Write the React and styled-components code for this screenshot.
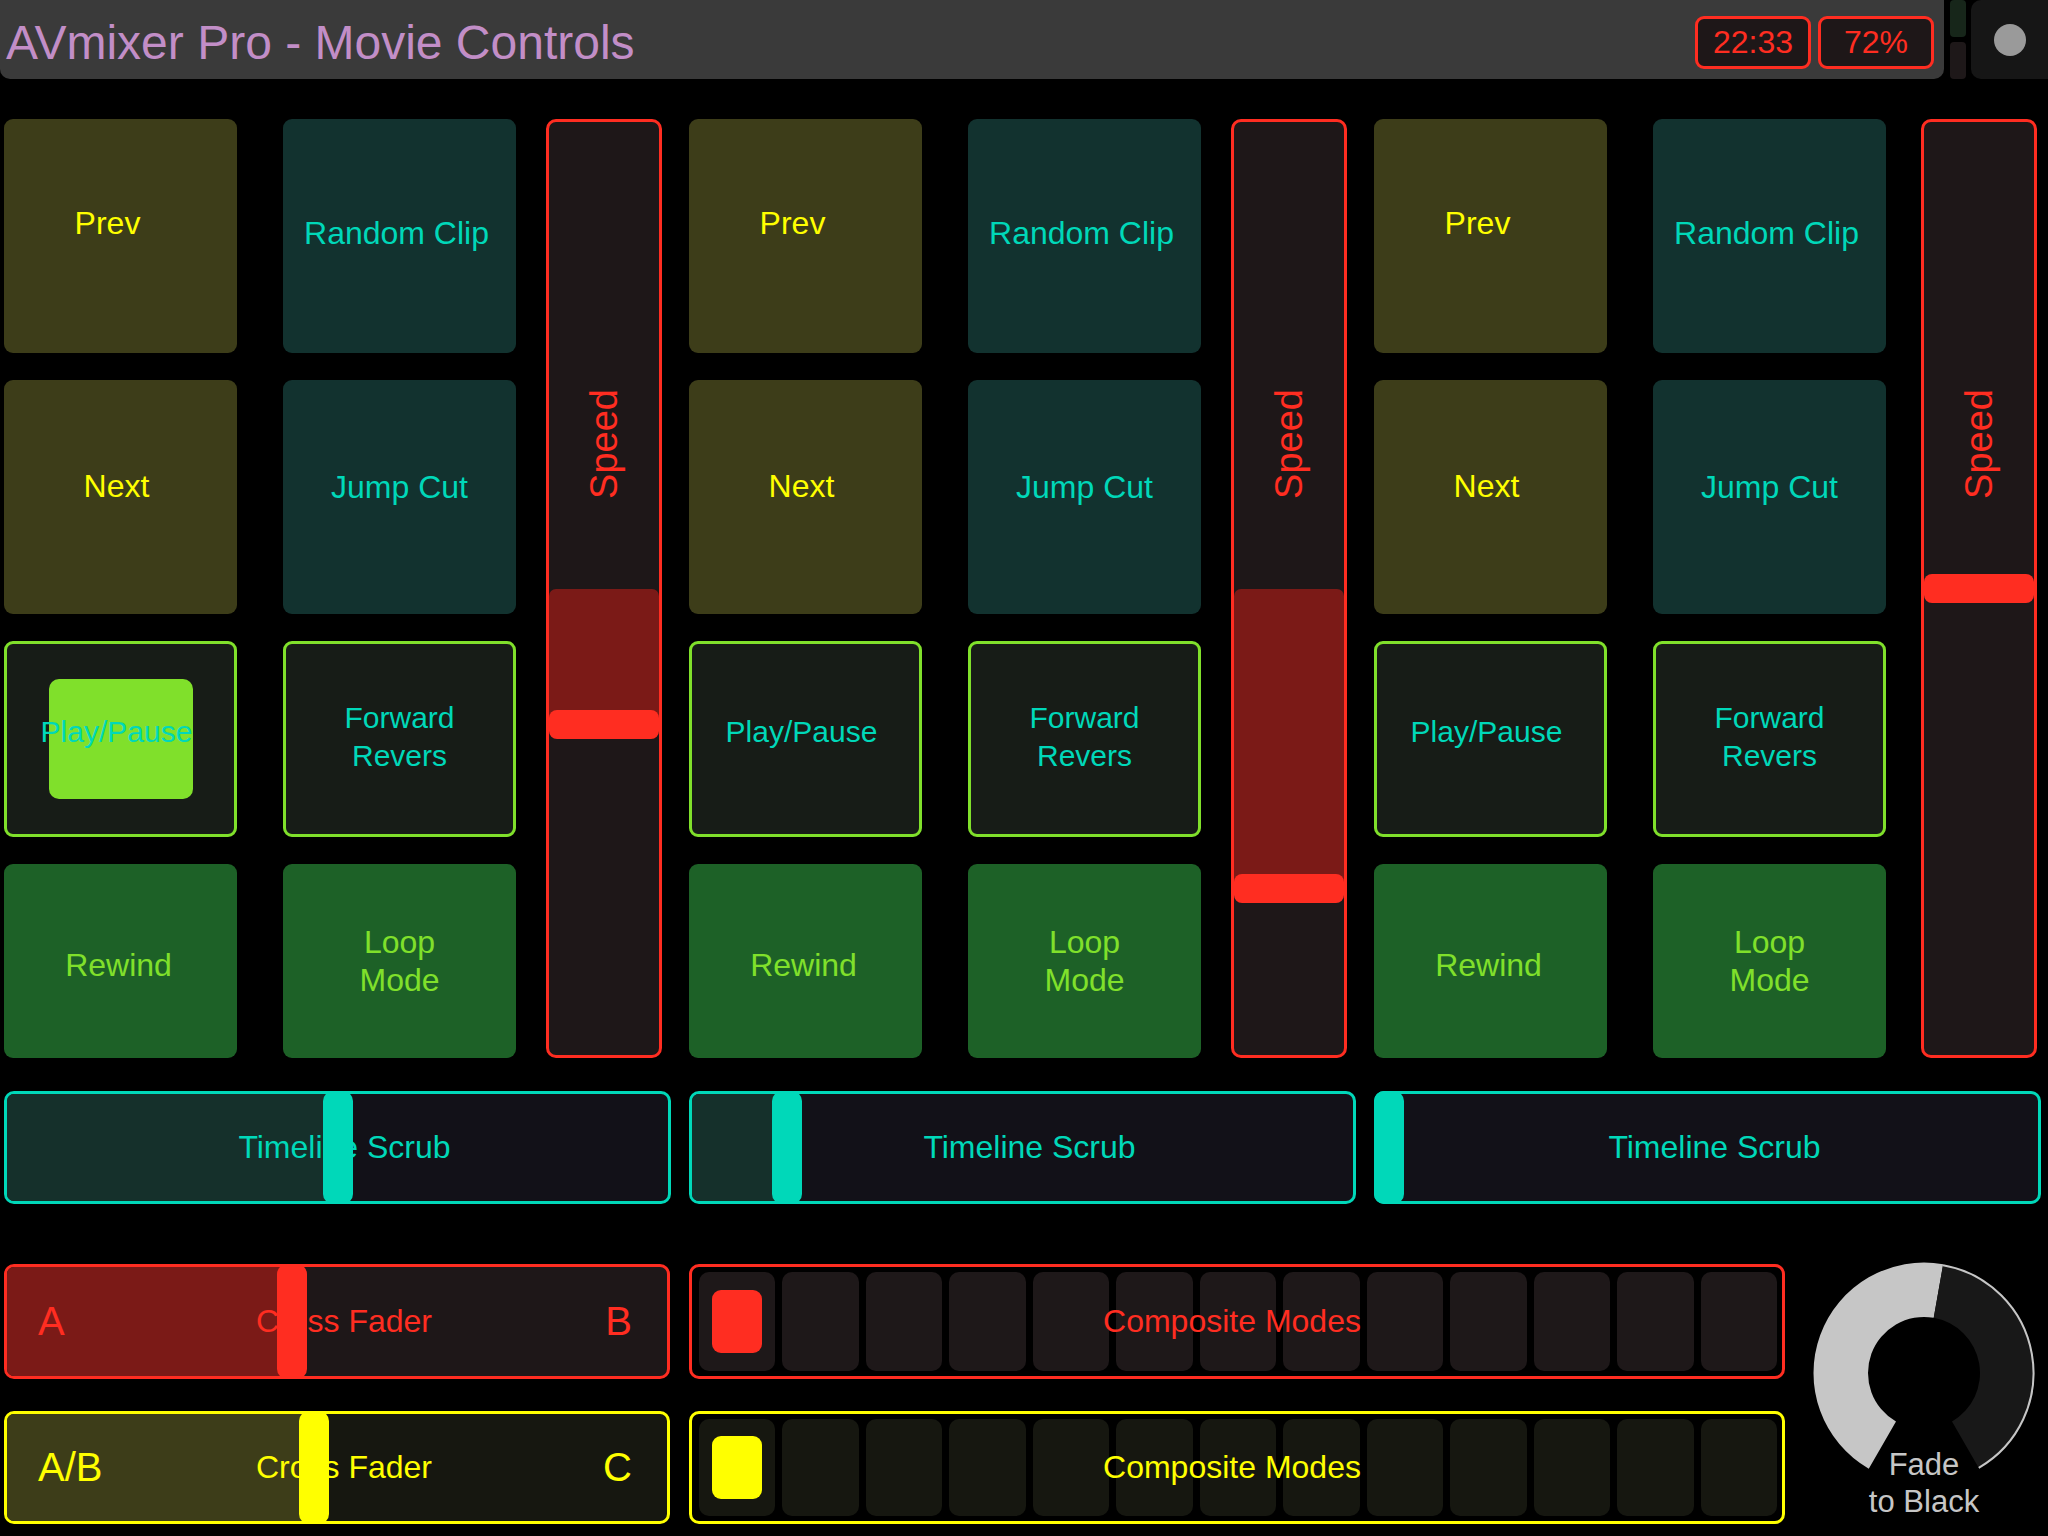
import React from 'react';
import styled, { createGlobalStyle } from 'styled-components';

const GlobalStyle = createGlobalStyle`
  html, body {
    margin: 0;
    padding: 0;
    background: #000;
  }
  body {
    font-family: 'Liberation Sans', Arial, sans-serif;
  }
`;

const RED = '#ff2d21';
const YELLOW = '#ffff00';
const TEAL = '#00d8b9';
const LIME = '#80e02b';

const padKinds = {
  cue: { bg: '#3d3d19', fg: YELLOW, border: 'transparent', size: 32 },
  clip: { bg: '#12322f', fg: TEAL, border: 'transparent', size: 32 },
  toggle: { bg: '#171c17', fg: TEAL, border: LIME, size: 30 },
  loop: { bg: '#1d6127', fg: LIME, border: 'transparent', size: 32 },
};

const groups = [
  { speed: 0.65, scrub: 0.5, lit: true, gap: 30 },
  { speed: 0.832, scrub: 0.13, lit: false, gap: 30 },
  { speed: 0.5, scrub: 0, lit: false, gap: 35 },
];

const pads = [
  { label: ['Prev'], kind: 'cue', dx: -13, dy: -13 },
  { label: ['Random Clip'], kind: 'clip', dx: -3, dy: -3 },
  { label: ['Next'], kind: 'cue', dx: -4, dy: -11 },
  { label: ['Jump Cut'], kind: 'clip', dx: 0, dy: -10 },
  { label: ['Play/Pause'], kind: 'toggle', dx: -4, dy: -7, play: true },
  { label: ['Forward', 'Revers'], kind: 'toggle', dx: 0, dy: -2 },
  { label: ['Rewind'], kind: 'loop', dx: -2, dy: 4 },
  { label: ['Loop', 'Mode'], kind: 'loop', dx: 0, dy: 0 },
];

// knob geometry
const KC = 111;
const polar = (r, deg) => {
  const a = (deg * Math.PI) / 180;
  return [KC + r * Math.sin(a), KC - r * Math.cos(a)];
};
const sector = (r1, r2, a0, a1) => {
  const large = a1 - a0 > 180 ? 1 : 0;
  const [x0, y0] = polar(r2, a0);
  const [x1, y1] = polar(r2, a1);
  const [x2, y2] = polar(r1, a1);
  const [x3, y3] = polar(r1, a0);
  return `M${x0} ${y0} A${r2} ${r2} 0 ${large} 1 ${x1} ${y1} L${x2} ${y2} A${r1} ${r1} 0 ${large} 0 ${x3} ${y3} Z`;
};
const arc = (r, a0, a1) => {
  const large = a1 - a0 > 180 ? 1 : 0;
  const [x0, y0] = polar(r, a0);
  const [x1, y1] = polar(r, a1);
  return `M${x0} ${y0} A${r} ${r} 0 ${large} 1 ${x1} ${y1}`;
};

const SpeedFader = ({ pos }) => (
  <SpeedTrack>
    <SpeedFill $pos={pos} />
    <SpeedLabel>Speed</SpeedLabel>
    <SpeedHandle $pos={pos} />
  </SpeedTrack>
);

const Track = ({ pos, color, dim, bg, height, left, right, children }) => (
  <TrackBox $c={color} $bg={bg} $h={height}>
    <TrackFill $pos={pos} $bg={dim} />
    <TrackSide>{left}</TrackSide>
    <TrackLabel>{children}</TrackLabel>
    <TrackSide $end>{right}</TrackSide>
    <TrackHandle $pos={pos} $c={color} />
  </TrackBox>
);

const ModeStrip = ({ color, cell }) => (
  <Strip $c={color}>
    {Array.from({ length: 13 }).map((_, i) => (
      <ModeCell key={i} $bg={cell}>
        {i === 0 && <ModeLit $c={color} />}
      </ModeCell>
    ))}
    <StripLabel $c={color}>Composite Modes</StripLabel>
  </Strip>
);

const App = () => {
  return (
    <Screen>
      <GlobalStyle />
      <Header>
        <TitleBar>
          <Title>AVmixer Pro - Movie Controls</Title>
          <Status>
            <StatusBox>22:33</StatusBox>
            <StatusBox>72%</StatusBox>
          </Status>
        </TitleBar>
        <Meter>
          <MeterSeg $bg="#17261a" />
          <MeterSeg $bg="#1e1819" />
        </Meter>
        <RecButton>
          <RecDot />
        </RecButton>
      </Header>

      <Deck>
        {groups.map((g, gi) => (
          <Group key={gi}>
            <Upper $gap={g.gap}>
              <PadGrid>
                {pads.map((p, pi) => (
                  <Pad key={pi} $kind={p.kind}>
                    {p.play && g.lit && <LitSquare />}
                    <PadLabel $dx={p.dx} $dy={p.dy}>
                      {p.label.map((line) => (
                        <span key={line}>{line}</span>
                      ))}
                    </PadLabel>
                  </Pad>
                ))}
              </PadGrid>
              <SpeedFader pos={g.speed} />
            </Upper>
            <Track pos={g.scrub} color={TEAL} dim="#15302b" bg="#121118" height={113}>
              Timeline Scrub
            </Track>
          </Group>
        ))}
      </Deck>

      <Mixer>
        <Track pos={0.43} color={RED} dim="#7b1a17" bg="#1e1718" left="A" right="B">
          Cross Fader
        </Track>
        <ModeStrip color={RED} cell="#1e1819" />
        <Knob>
          <svg width="222" height="222" viewBox="0 0 222 222">
            <path d={sector(56, 110.5, 210, 370)} fill="#c6c6c6" />
            <path d={sector(56, 110.5, 370, 510)} fill="#181818" />
            <path d={arc(109.5, 370, 510)} fill="none" stroke="#c6c6c6" strokeWidth="2" />
          </svg>
          <KnobLabel>
            Fade
            <br />
            to Black
          </KnobLabel>
        </Knob>
        <Track pos={0.464} color={YELLOW} dim="#3d3d19" bg="#161710" left="A/B" right="C">
          Cross Fader
        </Track>
        <ModeStrip color={YELLOW} cell="#161710" />
      </Mixer>
    </Screen>
  );
};

const Screen = styled.div`
  width: 2048px;
  height: 1536px;
  background: #000;
  overflow: hidden;
`;

const Header = styled.header`
  display: flex;
  height: 79px;
`;

const TitleBar = styled.div`
  flex: 0 0 1944px;
  box-sizing: border-box;
  display: flex;
  align-items: center;
  justify-content: space-between;
  padding: 6px 10px 0 6px;
  background: #3a3a3a;
  border-radius: 0 0 10px 10px;
`;

const Title = styled.h1`
  margin: 0;
  font-size: 48px;
  font-weight: normal;
  color: #c28ec7;
`;

const Status = styled.div`
  display: flex;
  gap: 7px;
`;

const StatusBox = styled.div`
  width: 116px;
  height: 53px;
  box-sizing: border-box;
  display: flex;
  align-items: center;
  justify-content: center;
  border: 3px solid ${RED};
  border-radius: 9px;
  background: #1e1718;
  color: ${RED};
  font-size: 32px;
`;

const Meter = styled.div`
  display: flex;
  flex-direction: column;
  gap: 5px;
  width: 16px;
  margin: 0 5px 0 6px;
`;

const MeterSeg = styled.div`
  flex: 1;
  border-radius: 4px;
  background: ${(p) => p.$bg};
`;

const RecButton = styled.div`
  flex: 1;
  display: flex;
  align-items: center;
  justify-content: center;
  background: #161616;
  border-radius: 10px 0 0 10px;
`;

const RecDot = styled.div`
  width: 32px;
  height: 32px;
  border-radius: 50%;
  background: #9a9a9a;
`;

const Deck = styled.main`
  display: grid;
  grid-template-columns: repeat(3, 667px);
  column-gap: 18px;
  padding: 40px 0 0 4px;
`;

const Group = styled.section`
  display: flex;
  flex-direction: column;
  gap: 33px;
`;

const Upper = styled.div`
  display: flex;
  gap: ${(p) => p.$gap}px;
`;

const PadGrid = styled.div`
  display: grid;
  grid-template-columns: 233px 233px;
  grid-template-rows: 234px 234px 196px 194px;
  column-gap: 46px;
  row-gap: 27px;
`;

const Pad = styled.div`
  position: relative;
  box-sizing: border-box;
  display: flex;
  align-items: center;
  justify-content: center;
  border: 3px solid ${(p) => padKinds[p.$kind].border};
  border-radius: 9px;
  background: ${(p) => padKinds[p.$kind].bg};
  color: ${(p) => padKinds[p.$kind].fg};
  font-size: ${(p) => padKinds[p.$kind].size}px;
  line-height: 38px;
  text-align: center;
`;

const LitSquare = styled.div`
  position: absolute;
  left: 50%;
  top: 50%;
  width: 144px;
  height: 120px;
  transform: translate(-50%, -50%);
  border-radius: 10px;
  background: ${LIME};
`;

const PadLabel = styled.div`
  position: relative;
  display: flex;
  flex-direction: column;
  white-space: nowrap;
  transform: translate(${(p) => p.$dx}px, ${(p) => p.$dy}px);
`;

const SpeedTrack = styled.div`
  position: relative;
  width: 116px;
  box-sizing: border-box;
  border: 3px solid ${RED};
  border-radius: 10px;
  background: #1e1718;
`;

const SpeedFill = styled.div`
  position: absolute;
  left: 0;
  right: 0;
  top: ${(p) => (p.$pos >= 0.5 ? '50%' : `calc(${p.$pos} * (100% - 29px) + 14.5px)`)};
  height: ${(p) =>
    p.$pos >= 0.5
      ? `calc(${p.$pos} * (100% - 29px) + 14.5px - 50%)`
      : `calc(50% - ${p.$pos} * (100% - 29px) - 14.5px)`};
  border-radius: 7px 7px 0 0;
  background: #7b1a17;
`;

const SpeedHandle = styled.div`
  position: absolute;
  left: 0;
  right: 0;
  height: 29px;
  top: calc(${(p) => p.$pos} * (100% - 29px));
  border-radius: 8px;
  background: ${RED};
`;

const SpeedLabel = styled.span`
  position: absolute;
  top: 322px;
  left: 50%;
  transform: translate(-50%, -50%) rotate(-90deg);
  color: ${RED};
  font-size: 38px;
`;

const TrackBox = styled.div`
  position: relative;
  box-sizing: border-box;
  height: ${(p) => (p.$h ? `${p.$h}px` : 'auto')};
  display: grid;
  grid-template-columns: 1fr auto 1fr;
  align-items: center;
  padding: 0 35px 0 31px;
  border: 3px solid ${(p) => p.$c};
  border-radius: 10px;
  background: ${(p) => p.$bg};
  color: ${(p) => p.$c};
`;

const TrackFill = styled.div`
  position: absolute;
  left: 0;
  top: 0;
  bottom: 0;
  width: calc(${(p) => p.$pos} * (100% - 24px) + 12px);
  border-radius: 7px 0 0 7px;
  background: ${(p) => p.$bg};
`;

const TrackHandle = styled.div`
  position: absolute;
  top: -3px;
  bottom: -3px;
  width: 30px;
  left: calc(${(p) => p.$pos} * (100% - 24px) - 3px);
  border-radius: 10px;
  background: ${(p) => p.$c};
`;

const TrackLabel = styled.span`
  position: relative;
  padding-left: 18px;
  font-size: 32px;
  white-space: nowrap;
`;

const TrackSide = styled.span`
  position: relative;
  font-size: 40px;
  justify-self: ${(p) => (p.$end ? 'end' : 'start')};
`;

const Mixer = styled.section`
  display: grid;
  grid-template-columns: 666px 1096px 1fr;
  grid-template-rows: 115px 113px;
  column-gap: 19px;
  row-gap: 32px;
  padding: 60px 0 0 4px;
`;

const Strip = styled.div`
  position: relative;
  box-sizing: border-box;
  display: grid;
  grid-template-columns: repeat(13, 1fr);
  gap: 7px;
  padding: 5px 5px 5px 7px;
  border: 3px solid ${(p) => p.$c};
  border-radius: 10px;
`;

const ModeCell = styled.div`
  display: flex;
  align-items: center;
  justify-content: center;
  border-radius: 10px;
  background: ${(p) => p.$bg};
`;

const ModeLit = styled.div`
  width: 50px;
  height: 63px;
  border-radius: 9px;
  background: ${(p) => p.$c};
`;

const StripLabel = styled.span`
  position: absolute;
  inset: 0;
  display: flex;
  align-items: center;
  justify-content: center;
  padding-right: 10px;
  color: ${(p) => p.$c};
  font-size: 32px;
`;

const Knob = styled.div`
  position: relative;
  grid-column: 3;
  grid-row: 1 / span 2;
  align-self: start;
  width: 222px;
  height: 222px;
  margin: -2px 0 0 9px;

  svg {
    display: block;
  }
`;

const KnobLabel = styled.div`
  position: absolute;
  top: 184px;
  left: 0;
  right: 0;
  text-align: center;
  color: #c6c6c6;
  font-size: 31px;
  line-height: 37px;
`;

export default App;
